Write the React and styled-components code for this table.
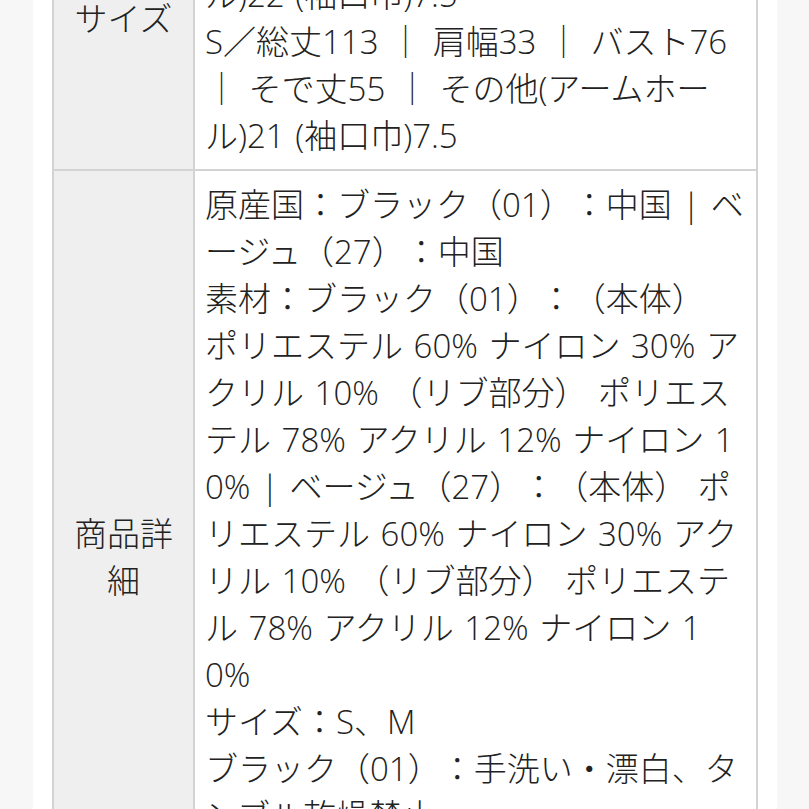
import React from 'react';
import styled, { createGlobalStyle } from 'styled-components';

const GlobalStyle = createGlobalStyle`
    html, body {
        margin: 0;
        padding: 0;
        background-color: #f7f7f7;
    }
    body {
        font-family: "Open Sans", "Noto Sans CJK JP", sans-serif;
        color: #222;
        text-spacing-trim: space-all;
    }
`;

const rows = [
    {
        label: 'サイズ',
        lines: [
            'M／総丈115 ｜ 肩幅34 ｜ バスト80 ｜ そで丈56 ｜ その他(アームホール)22 (袖口巾)7.5',
            'S／総丈113 ｜ 肩幅33 ｜ バスト76 ｜ そで丈55 ｜ その他(アームホール)21 (袖口巾)7.5',
        ],
    },
    {
        label: '商品詳細',
        lines: [
            '原産国：ブラック（01）：中国 | ベージュ（27）：中国',
            '素材：ブラック（01）：（本体） ポリエステル 60% ナイロン 30% アクリル 10% （リブ部分） ポリエステル 78% アクリル 12% ナイロン 10% | ベージュ（27）：（本体） ポリエステル 60% ナイロン 30% アクリル 10% （リブ部分） ポリエステル 78% アクリル 12% ナイロン 10%',
            'サイズ：S、M',
            'ブラック（01）：手洗い・漂白、タンブル乾燥禁止',
            'ベージュ（27）：手洗い・漂白、タンブル乾燥禁止',
        ],
    },
];

function App() {
    return (
        <>
            <GlobalStyle />
            <Panel>
                <SpecTable>
                    <colgroup>
                        <col style={{ width: 141 }} />
                        <col />
                    </colgroup>
                    <tbody>
                        {rows.map((row) => (
                            <tr key={row.label}>
                                <Label>{row.label}</Label>
                                <Value>
                                    {row.lines.map((line, i) => (
                                        <Line key={i}>{line}</Line>
                                    ))}
                                </Value>
                            </tr>
                        ))}
                    </tbody>
                </SpecTable>
            </Panel>
        </>
    );
}

const Panel = styled.div`
    background-color: #fff;
    width: 706px;
    margin: -135px 0 0 33px;
    padding: 0 19px 40px;
`;

const SpecTable = styled.table`
    width: 100%;
    table-layout: fixed;
    border-collapse: collapse;
    border: 2px solid #d3d3d3;
    font-size: 33px;
    line-height: 47px;
    font-weight: 300;
    word-spacing: 2px;
`;

const Label = styled.th`
    background-color: #efefef;
    border: 2px solid #d3d3d3;
    font-weight: 300;
    text-align: center;
    vertical-align: middle;
    padding: 10px 6px;
    word-break: break-all;
`;

const Value = styled.td`
    border: 2px solid #d3d3d3;
    padding: 10px 12px 10px 10px;
    vertical-align: top;
    word-break: break-all;
`;

const Line = styled.div``;

export default App;
